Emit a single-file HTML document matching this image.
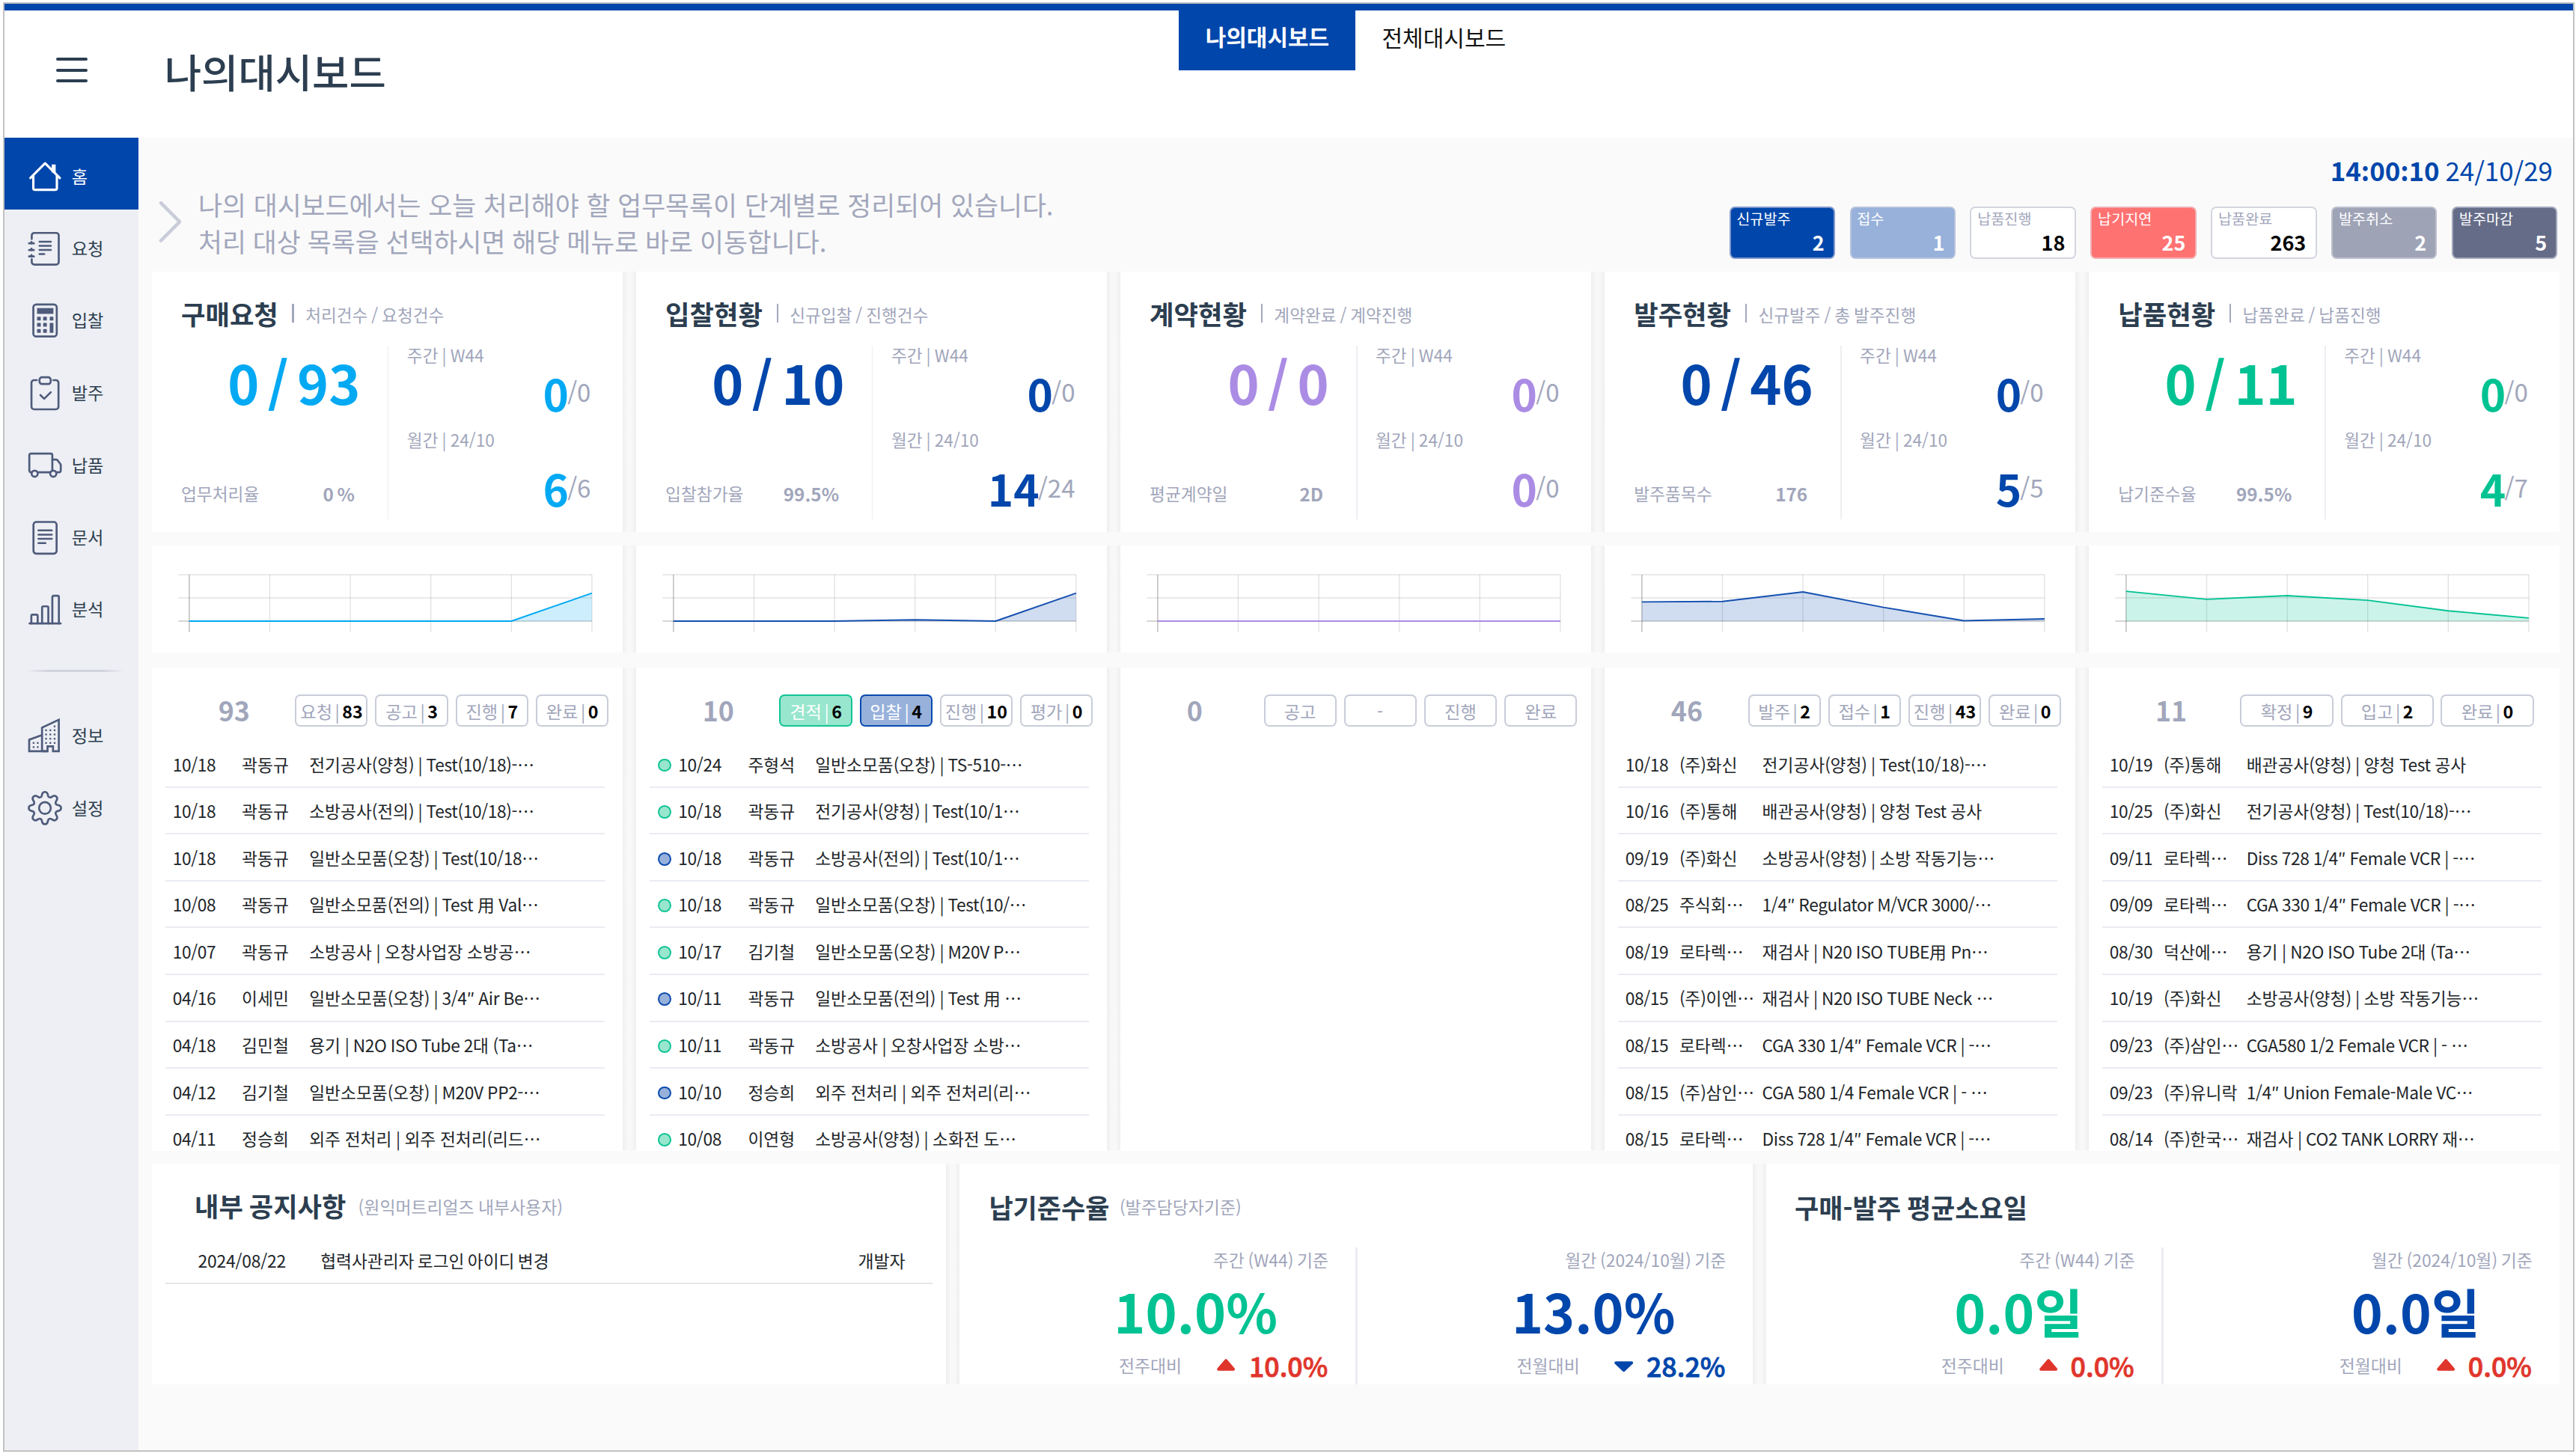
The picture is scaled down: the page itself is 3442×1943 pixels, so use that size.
<!DOCTYPE html>
<html lang="ko"><head><meta charset="utf-8"><title>나의대시보드</title>
<style>
html,body{margin:0;padding:0;background:#fff;}
body{width:3442px;height:1943px;overflow:hidden;position:relative;font-family:"Noto Sans CJK KR","Liberation Sans","NanumGothic",sans-serif;}
#pos{position:absolute;left:6px;top:5px;}
#frame{position:absolute;left:0;top:0;width:1920px;height:1081.5px;zoom:1.7875;background:#fafafa;outline:1.12px solid #c2c2c2;}
#clip{position:absolute;left:0;top:0;width:1920px;height:1081.5px;overflow:hidden;}
@supports not (zoom:2){#frame{transform:scale(1.7875);transform-origin:0 0;}}
.t{position:absolute;white-space:nowrap;margin:0;}
.b{position:absolute;box-sizing:border-box;}
.ic{position:absolute;width:24px;height:24px;overflow:visible;}
.card{position:absolute;background:#fff;overflow:hidden;}
.gap{position:absolute;width:10px;background:linear-gradient(90deg,#efefef 0%,#f8f8f8 35%,#f8f8f8 65%,#efefef 100%);}
.btn{position:absolute;box-sizing:border-box;height:24px;border:1.12px solid #c9cdd9;border-radius:4px;background:#fff;text-align:center;font-size:13px;line-height:23px;word-spacing:-1.7px;color:#a1a6bb;white-space:nowrap;}
.btn b{color:#000;font-weight:700;}
.row{position:absolute;left:10px;width:328.5px;height:35px;box-sizing:border-box;border-bottom:1.12px solid #eaecf3;font-size:12.72px;line-height:35px;color:#212529;white-space:nowrap;word-spacing:-0.4px;}
.row>span{position:absolute;top:0.25px;}
.row .l{letter-spacing:-0.2px;}
.dot{position:absolute;width:10px;height:10px;border-radius:50%;box-sizing:border-box;border:1.12px solid;}
</style></head><body>
<div id="pos"><div id="frame"><div id="clip">
<div class="b" style="left:0.00px;top:0.00px;width:1920.00px;height:100.00px;background:#fff;"></div>
<div class="b" style="left:0.00px;top:0.00px;width:1920.00px;height:5.00px;background:#0046ab;"></div>
<div class="b" style="left:38.40px;top:40.25px;width:23.80px;height:2.30px;background:#2c3e50;border-radius:1.2px;"></div>
<div class="b" style="left:38.40px;top:48.45px;width:23.80px;height:2.30px;background:#2c3e50;border-radius:1.2px;"></div>
<div class="b" style="left:38.40px;top:56.65px;width:23.80px;height:2.30px;background:#2c3e50;border-radius:1.2px;"></div>
<div class="t" style="top:28.65px;font-size:30px;line-height:44px;font-weight:500;color:#2c3e50;left:119.60px;">나의대시보드</div>
<div class="b" style="left:878.00px;top:5.00px;width:132.00px;height:45.00px;background:#0046ab;"></div>
<div class="t" style="top:11.38px;font-size:16.75px;line-height:26px;font-weight:700;color:#fff;left:644.00px;width:600px;text-align:center;">나의대시보드</div>
<div class="t" style="top:11.58px;font-size:16.8px;line-height:26px;font-weight:400;color:#111;left:776.00px;width:600px;text-align:center;">전체대시보드</div>
<div class="b" style="left:0.00px;top:100.00px;width:100.00px;height:982.00px;background:#edeff4;"></div>
<div class="b" style="left:0.00px;top:100.00px;width:100.00px;height:54.00px;background:#0046ab;"></div>
<svg class="ic" style="left:18.6px;top:116.5px;width:25px;height:25px" viewBox="0 0 25 25" fill="none" stroke="#fff" stroke-width="1.75" stroke-linecap="round" stroke-linejoin="round"><path d="M0.9 13.9 L11.9 2.9 L22.9 13.9" /><path d="M3.1 12.1 V21.5 a1.2 1.2 0 0 0 1.2 1.2 H19.5 a1.2 1.2 0 0 0 1.2-1.2 V12.1" /><rect x="16.8" y="3.8" width="3" height="6" fill="#fff" stroke="none"/></svg>
<div class="t" style="top:119.38px;font-size:13px;line-height:20px;font-weight:400;color:#fff;left:50.20px;">홈</div>
<svg class="ic" style="left:18.6px;top:170.5px;width:25px;height:25px" viewBox="0 0 25 25" fill="none" stroke="#4e5b7b" stroke-width="1.5" stroke-linecap="round" stroke-linejoin="round"><path d="M1.9 5.2 V2.7 a2 2 0 0 1 2-2 H20.1 a2 2 0 0 1 2 2 V22.4 a2 2 0 0 1-2 2 H3.9 a2 2 0 0 1-2-2 V20.4"/><path d="M-0.1 8.5 h3.6 M-0.1 13.5 h3.6 M-0.1 18.3 h3.6" stroke-width="1.5"/><path d="M1.7 7.5 v1 M1.7 12.5 v1 M1.7 17.3 v1" stroke-width="1.6"/><path d="M7.7 7.25 h8.5 M7.7 10.35 h8.5 M7.7 13.45 h8.5 M7.7 16.5 h3.6" stroke-width="1.45"/></svg>
<div class="t" style="top:172.78px;font-size:13px;line-height:20px;font-weight:400;color:#2c3e50;left:50.20px;">요청</div>
<svg class="ic" style="left:18.6px;top:224.5px;width:25px;height:25px" viewBox="0 0 25 25" fill="none" stroke="#4e5b7b" stroke-width="1.5" stroke-linecap="round" stroke-linejoin="round"><rect x="3.1" y="0.5" width="17.5" height="23.9" rx="2.2"/><rect x="5.9" y="3.2" width="12.2" height="4.3" fill="#4e5b7b" stroke="none"/><g fill="#4e5b7b" stroke="none"><rect x="5.9" y="9.7" width="2.75" height="2.75" rx=".3"/><rect x="10.45" y="9.7" width="2.75" height="2.75" rx=".3"/><rect x="15.35" y="9.7" width="2.75" height="2.75" rx=".3"/><rect x="5.9" y="14.3" width="2.75" height="2.75" rx=".3"/><rect x="10.45" y="14.3" width="2.75" height="2.75" rx=".3"/><rect x="15.35" y="14.3" width="2.75" height="7.4" rx=".3"/><rect x="5.9" y="18.95" width="2.75" height="2.75" rx=".3"/><rect x="10.45" y="18.95" width="2.75" height="2.75" rx=".3"/></g></svg>
<div class="t" style="top:226.78px;font-size:13px;line-height:20px;font-weight:400;color:#2c3e50;left:50.20px;">입찰</div>
<svg class="ic" style="left:18.6px;top:278.5px;width:25px;height:25px" viewBox="0 0 25 25" fill="none" stroke="#4e5b7b" stroke-width="1.5" stroke-linecap="round" stroke-linejoin="round"><path d="M5.7 2.8 H3.7 a2 2 0 0 0-2 2 V22.6 a2 2 0 0 0 2 2 H19.9 a2 2 0 0 0 2-2 V4.8 a2 2 0 0 0-2-2 H18.1"/><rect x="7.7" y="0.65" width="8.4" height="5.05" rx="1.9"/><path d="M8.4 14 L11.2 16.7 L16.15 11.8"/></svg>
<div class="t" style="top:280.79px;font-size:13px;line-height:20px;font-weight:400;color:#2c3e50;left:50.20px;">발주</div>
<svg class="ic" style="left:18.6px;top:332.5px;width:25px;height:25px" viewBox="0 0 25 25" fill="none" stroke="#4e5b7b" stroke-width="1.5" stroke-linecap="round" stroke-linejoin="round"><path d="M1.9 18 H1.3 a1.2 1.2 0 0 1-1.2-1.2 V5.2 a1.2 1.2 0 0 1 1.2-1.2 H16.1 a1.2 1.2 0 0 1 1.2 1.2 V16.7"/><path d="M6.4 18 H15.7"/><path d="M17.3 8.45 H20.1 a1.4 1.4 0 0 1 1 .45 L23.2 11.6 a1.4 1.4 0 0 1 .4 1 V16.8 a1.2 1.2 0 0 1-1.2 1.2 H20.3"/><circle cx="4.1" cy="19" r="2.3"/><circle cx="18" cy="19" r="2.3"/></svg>
<div class="t" style="top:335.19px;font-size:13px;line-height:20px;font-weight:400;color:#2c3e50;left:50.20px;">납품</div>
<svg class="ic" style="left:18.6px;top:386.5px;width:25px;height:25px" viewBox="0 0 25 25" fill="none" stroke="#4e5b7b" stroke-width="1.5" stroke-linecap="round" stroke-linejoin="round"><rect x="3.2" y="0.85" width="17.3" height="23.65" rx="2.1"/><path d="M6.9 7.1 h10 M6.9 10.3 h10 M6.9 13.4 h10 M6.9 16.6 h5.3" stroke-width="1.4"/></svg>
<div class="t" style="top:388.79px;font-size:13px;line-height:20px;font-weight:400;color:#2c3e50;left:50.20px;">문서</div>
<svg class="ic" style="left:18.6px;top:440.5px;width:25px;height:25px" viewBox="0 0 25 25" fill="none" stroke="#4e5b7b" stroke-width="1.5" stroke-linecap="round" stroke-linejoin="round"><path d="M0.3 23 H23.5" stroke-width="1.6"/><path d="M1.6 23 V17.3 a.9 .9 0 0 1 .9-.9 h2.95 a.9 .9 0 0 1 .9 .9 V23"/><path d="M9.65 23 V11.1 a.9 .9 0 0 1 .9-.9 h2.85 a.9 .9 0 0 1 .9 .9 V23"/><path d="M17.3 23 V3.2 a.9 .9 0 0 1 .9-.9 h3.1 a.9 .9 0 0 1 .9 .9 V23"/></svg>
<div class="t" style="top:442.79px;font-size:13px;line-height:20px;font-weight:400;color:#2c3e50;left:50.20px;">분석</div>
<svg class="ic" style="left:18.6px;top:534.9px;width:25px;height:25px" viewBox="0 0 25 25" fill="none" stroke="#4e5b7b" stroke-width="1.5" stroke-linecap="round" stroke-linejoin="round"><path d="M9.6 24 V6.3 L22.15 0.5 V24 H17.8 V20.4 H13.7 V24 H0 V15.4 L9.6 11.95" stroke-linejoin="miter"/><path d="M9.6 24 H13.7" /><g fill="#4e5b7b" stroke="none"><rect x="11.95" y="7.65" width="1.3" height="1.3"/><rect x="11.95" y="10.80" width="1.3" height="1.3"/><rect x="11.95" y="14.00" width="1.3" height="1.3"/><rect x="11.95" y="17.15" width="1.3" height="1.3"/><rect x="15.15" y="7.65" width="1.3" height="1.3"/><rect x="15.15" y="10.80" width="1.3" height="1.3"/><rect x="15.15" y="14.00" width="1.3" height="1.3"/><rect x="15.15" y="17.15" width="1.3" height="1.3"/><rect x="18.35" y="7.65" width="1.3" height="1.3"/><rect x="18.35" y="10.80" width="1.3" height="1.3"/><rect x="18.35" y="14.00" width="1.3" height="1.3"/><rect x="18.35" y="17.15" width="1.3" height="1.3"/><rect x="18.35" y="4.75" width="1.3" height="1.3"/><rect x="2.65" y="17.15" width="1.3" height="1.3"/><rect x="2.65" y="20.25" width="1.3" height="1.3"/><rect x="5.75" y="17.15" width="1.3" height="1.3"/><rect x="5.75" y="20.25" width="1.3" height="1.3"/></g></svg>
<div class="t" style="top:537.18px;font-size:13px;line-height:20px;font-weight:400;color:#2c3e50;left:50.20px;">정보</div>
<svg class="ic" style="left:18.6px;top:588.9px;width:25px;height:25px" viewBox="0 0 25 25" fill="none" stroke="#4e5b7b" stroke-width="1.5" stroke-linecap="round" stroke-linejoin="round"><g transform="translate(-0.74,-0.3)"><circle cx="12.5" cy="12.5" r="4.4"/><path d="M10.5 1.9 a2.1 2.1 0 0 1 4 0 l.4 1.5 a1.6 1.6 0 0 0 2.3 .95 l1.35-.75 a2.1 2.1 0 0 1 2.85 2.85 l-.75 1.35 a1.6 1.6 0 0 0 .95 2.3 l1.5 .4 a2.1 2.1 0 0 1 0 4 l-1.5 .4 a1.6 1.6 0 0 0-.95 2.3 l.75 1.35 a2.1 2.1 0 0 1-2.85 2.85 l-1.35-.75 a1.6 1.6 0 0 0-2.3 .95 l-.4 1.5 a2.1 2.1 0 0 1-4 0 l-.4-1.5 a1.6 1.6 0 0 0-2.3-.95 l-1.35 .75 a2.1 2.1 0 0 1-2.85-2.85 l.75-1.35 a1.6 1.6 0 0 0-.95-2.3 l-1.5-.4 a2.1 2.1 0 0 1 0-4 l1.5-.4 a1.6 1.6 0 0 0 .95-2.3 l-.75-1.35 a2.1 2.1 0 0 1 2.85-2.85 l1.35 .75 a1.6 1.6 0 0 0 2.3-.95 z"/></g></svg>
<div class="t" style="top:591.18px;font-size:13px;line-height:20px;font-weight:400;color:#2c3e50;left:50.20px;">설정</div>
<div class="b" style="left:17.00px;top:498.10px;width:72.00px;height:1.30px;background:linear-gradient(90deg,rgba(208,210,222,0),rgba(208,210,222,1) 22%,rgba(208,210,222,1) 78%,rgba(208,210,222,0));"></div>
<div class="t" lang="en" style="right:15.2px;top:109.5px;font-size:19.5px;line-height:30px;color:#0046ab;"><b style="font-weight:700">14:00:10</b> 24/10/29</div>
<svg class="ic" style="left:112px;top:146px;width:24px;height:34px" viewBox="0 0 24 34" fill="none" stroke="#c9cdda" stroke-width="2.5" stroke-linecap="round" stroke-linejoin="round"><path d="M5 2.9 L19.1 17 L5 31.1"/></svg>
<div class="t" style="top:137.08px;font-size:19.45px;line-height:26px;font-weight:400;color:#a2a7bc;left:144.90px;">나의 대시보드에서는 오늘 처리해야 할 업무목록이 단계별로 정리되어 있습니다.</div>
<div class="t" style="top:164.43px;font-size:19.45px;line-height:26px;font-weight:400;color:#a2a7bc;left:144.90px;word-spacing:-0.45px;">처리 대상 목록을 선택하시면 해당 메뉴로 바로 이동합니다.</div>
<div class="b" style="left:1289.30px;top:151.80px;width:79.00px;height:39.00px;background:#0046ab;border:1.12px solid #7f98cc;border-radius:4px;"></div>
<div class="t" style="top:152.90px;font-size:11px;line-height:16px;font-weight:400;color:#fff;left:1294.70px;">신규발주</div>
<div class="t" style="top:168.47px;font-size:15.1px;line-height:20px;font-weight:700;color:#fff;right:559.70px;text-align:right;">2</div>
<div class="b" style="left:1379.33px;top:151.80px;width:79.00px;height:39.00px;background:#97b1da;border:1.12px solid #b7c3dc;border-radius:4px;"></div>
<div class="t" style="top:152.90px;font-size:11px;line-height:16px;font-weight:400;color:#fff;left:1384.73px;">접수</div>
<div class="t" style="top:168.47px;font-size:15.1px;line-height:20px;font-weight:700;color:#fff;right:469.67px;text-align:right;">1</div>
<div class="b" style="left:1469.36px;top:151.80px;width:79.00px;height:39.00px;background:#fff;border:1.12px solid #d3d6e0;border-radius:4px;"></div>
<div class="t" style="top:152.90px;font-size:11px;line-height:16px;font-weight:400;color:#a1a6bb;left:1474.76px;">납품진행</div>
<div class="t" style="top:168.47px;font-size:15.1px;line-height:20px;font-weight:700;color:#000;right:379.64px;text-align:right;">18</div>
<div class="b" style="left:1559.39px;top:151.80px;width:79.00px;height:39.00px;background:#ff7272;border:1.12px solid #f2aeb2;border-radius:4px;"></div>
<div class="t" style="top:152.90px;font-size:11px;line-height:16px;font-weight:400;color:#fff;left:1564.79px;">납기지연</div>
<div class="t" style="top:168.47px;font-size:15.1px;line-height:20px;font-weight:700;color:#fff;right:289.61px;text-align:right;">25</div>
<div class="b" style="left:1649.42px;top:151.80px;width:79.00px;height:39.00px;background:#fff;border:1.12px solid #d3d6e0;border-radius:4px;"></div>
<div class="t" style="top:152.90px;font-size:11px;line-height:16px;font-weight:400;color:#a1a6bb;left:1654.82px;">납품완료</div>
<div class="t" style="top:168.47px;font-size:15.1px;line-height:20px;font-weight:700;color:#000;right:199.58px;text-align:right;">263</div>
<div class="b" style="left:1739.45px;top:151.80px;width:79.00px;height:39.00px;background:#9ea3b6;border:1.12px solid #bcc0ce;border-radius:4px;"></div>
<div class="t" style="top:152.90px;font-size:11px;line-height:16px;font-weight:400;color:#fff;left:1744.85px;">발주취소</div>
<div class="t" style="top:168.47px;font-size:15.1px;line-height:20px;font-weight:700;color:#fff;right:109.55px;text-align:right;">2</div>
<div class="b" style="left:1829.48px;top:151.80px;width:79.00px;height:39.00px;background:#646c88;border:1.12px solid #a3a8ba;border-radius:4px;"></div>
<div class="t" style="top:152.90px;font-size:11px;line-height:16px;font-weight:400;color:#fff;left:1834.88px;">발주마감</div>
<div class="t" style="top:168.47px;font-size:15.1px;line-height:20px;font-weight:700;color:#fff;right:19.52px;text-align:right;">5</div>
<div class="b" style="left:110.00px;top:200.00px;width:352.00px;height:195.00px;background:#fff;"></div>
<div class="t" style="top:216.51px;font-size:19.75px;line-height:30px;font-weight:700;color:#2c3e50;left:132.00px;">구매요청</div>
<div class="b" style="left:215.10px;top:224.30px;width:1.30px;height:14.20px;background:#a3a8bc;"></div>
<div class="t" style="top:222.80px;font-size:12.65px;line-height:20px;font-weight:400;color:#a1a6bb;left:225.00px;word-spacing:-0.8px;">처리건수 / 요청건수</div>
<div class="t" style="top:254.70px;font-size:40px;line-height:56px;font-weight:700;color:#03a9f3;right:1654.00px;text-align:right;word-spacing:-4.8px;">0 / 93</div>
<div class="b" style="left:286.20px;top:255.40px;width:1.00px;height:129.80px;background:#eeeef3;"></div>
<div class="t" style="top:252.80px;font-size:12.65px;line-height:20px;font-weight:400;color:#a1a6bb;left:300.90px;word-spacing:-0.7px;">주간 | W44</div>
<div class="t" style="top:316.15px;font-size:12.65px;line-height:20px;font-weight:400;color:#a1a6bb;left:300.90px;word-spacing:-0.7px;">월간 | 24/10</div>
<div class="t" style="right:1481.70px;top:266.6px;line-height:48px;font-size:32.7px;font-weight:700;color:#03a9f3;">0<span style="font-size:18.5px;font-weight:400;color:#a1a6bb;position:relative;top:-6.9px;margin-left:-1px;">/0</span></div>
<div class="t" style="right:1481.70px;top:338.1px;line-height:48px;font-size:32.7px;font-weight:700;color:#03a9f3;">6<span style="font-size:18.5px;font-weight:400;color:#a1a6bb;position:relative;top:-6.9px;margin-left:-1px;">/6</span></div>
<div class="t" style="top:356.20px;font-size:12.7px;line-height:20px;font-weight:400;color:#a1a6bb;left:132.00px;">업무처리율</div>
<div class="t" style="top:356.15px;font-size:13.6px;line-height:20px;font-weight:700;color:#a1a6bb;right:1658.20px;text-align:right;word-spacing:-1.2px;">0 %</div>
<div class="b" style="left:472.00px;top:200.00px;width:352.00px;height:195.00px;background:#fff;"></div>
<div class="t" style="top:216.51px;font-size:19.75px;line-height:30px;font-weight:700;color:#2c3e50;left:494.00px;">입찰현황</div>
<div class="b" style="left:577.10px;top:224.30px;width:1.30px;height:14.20px;background:#a3a8bc;"></div>
<div class="t" style="top:222.80px;font-size:12.65px;line-height:20px;font-weight:400;color:#a1a6bb;left:587.00px;word-spacing:-0.8px;">신규입찰 / 진행건수</div>
<div class="t" style="top:254.70px;font-size:40px;line-height:56px;font-weight:700;color:#0046ab;right:1292.00px;text-align:right;word-spacing:-4.8px;">0 / 10</div>
<div class="b" style="left:648.20px;top:255.40px;width:1.00px;height:129.80px;background:#eeeef3;"></div>
<div class="t" style="top:252.80px;font-size:12.65px;line-height:20px;font-weight:400;color:#a1a6bb;left:662.90px;word-spacing:-0.7px;">주간 | W44</div>
<div class="t" style="top:316.15px;font-size:12.65px;line-height:20px;font-weight:400;color:#a1a6bb;left:662.90px;word-spacing:-0.7px;">월간 | 24/10</div>
<div class="t" style="right:1119.70px;top:266.6px;line-height:48px;font-size:32.7px;font-weight:700;color:#0046ab;">0<span style="font-size:18.5px;font-weight:400;color:#a1a6bb;position:relative;top:-6.9px;margin-left:-1px;">/0</span></div>
<div class="t" style="right:1119.70px;top:338.1px;line-height:48px;font-size:32.7px;font-weight:700;color:#0046ab;">14<span style="font-size:18.5px;font-weight:400;color:#a1a6bb;position:relative;top:-6.9px;margin-left:-1px;">/24</span></div>
<div class="t" style="top:356.20px;font-size:12.7px;line-height:20px;font-weight:400;color:#a1a6bb;left:494.00px;">입찰참가율</div>
<div class="t" style="top:356.15px;font-size:13.6px;line-height:20px;font-weight:700;color:#a1a6bb;right:1296.20px;text-align:right;word-spacing:-1.2px;">99.5%</div>
<div class="b" style="left:834.00px;top:200.00px;width:352.00px;height:195.00px;background:#fff;"></div>
<div class="t" style="top:216.51px;font-size:19.75px;line-height:30px;font-weight:700;color:#2c3e50;left:856.00px;">계약현황</div>
<div class="b" style="left:939.10px;top:224.30px;width:1.30px;height:14.20px;background:#a3a8bc;"></div>
<div class="t" style="top:222.80px;font-size:12.65px;line-height:20px;font-weight:400;color:#a1a6bb;left:949.00px;word-spacing:-0.8px;">계약완료 / 계약진행</div>
<div class="t" style="top:254.70px;font-size:40px;line-height:56px;font-weight:700;color:#ab8ce4;right:930.00px;text-align:right;word-spacing:-4.8px;">0 / 0</div>
<div class="b" style="left:1010.20px;top:255.40px;width:1.00px;height:129.80px;background:#eeeef3;"></div>
<div class="t" style="top:252.80px;font-size:12.65px;line-height:20px;font-weight:400;color:#a1a6bb;left:1024.90px;word-spacing:-0.7px;">주간 | W44</div>
<div class="t" style="top:316.15px;font-size:12.65px;line-height:20px;font-weight:400;color:#a1a6bb;left:1024.90px;word-spacing:-0.7px;">월간 | 24/10</div>
<div class="t" style="right:757.70px;top:266.6px;line-height:48px;font-size:32.7px;font-weight:700;color:#ab8ce4;">0<span style="font-size:18.5px;font-weight:400;color:#a1a6bb;position:relative;top:-6.9px;margin-left:-1px;">/0</span></div>
<div class="t" style="right:757.70px;top:338.1px;line-height:48px;font-size:32.7px;font-weight:700;color:#ab8ce4;">0<span style="font-size:18.5px;font-weight:400;color:#a1a6bb;position:relative;top:-6.9px;margin-left:-1px;">/0</span></div>
<div class="t" style="top:356.20px;font-size:12.7px;line-height:20px;font-weight:400;color:#a1a6bb;left:856.00px;">평균계약일</div>
<div class="t" style="top:356.15px;font-size:13.6px;line-height:20px;font-weight:700;color:#a1a6bb;right:934.20px;text-align:right;word-spacing:-1.2px;">2D</div>
<div class="b" style="left:1196.00px;top:200.00px;width:352.00px;height:195.00px;background:#fff;"></div>
<div class="t" style="top:216.51px;font-size:19.75px;line-height:30px;font-weight:700;color:#2c3e50;left:1218.00px;">발주현황</div>
<div class="b" style="left:1301.10px;top:224.30px;width:1.30px;height:14.20px;background:#a3a8bc;"></div>
<div class="t" style="top:222.80px;font-size:12.65px;line-height:20px;font-weight:400;color:#a1a6bb;left:1311.00px;word-spacing:-0.8px;">신규발주 / 총 발주진행</div>
<div class="t" style="top:254.70px;font-size:40px;line-height:56px;font-weight:700;color:#0046ab;right:568.00px;text-align:right;word-spacing:-4.8px;">0 / 46</div>
<div class="b" style="left:1372.20px;top:255.40px;width:1.00px;height:129.80px;background:#eeeef3;"></div>
<div class="t" style="top:252.80px;font-size:12.65px;line-height:20px;font-weight:400;color:#a1a6bb;left:1386.90px;word-spacing:-0.7px;">주간 | W44</div>
<div class="t" style="top:316.15px;font-size:12.65px;line-height:20px;font-weight:400;color:#a1a6bb;left:1386.90px;word-spacing:-0.7px;">월간 | 24/10</div>
<div class="t" style="right:395.70px;top:266.6px;line-height:48px;font-size:32.7px;font-weight:700;color:#0046ab;">0<span style="font-size:18.5px;font-weight:400;color:#a1a6bb;position:relative;top:-6.9px;margin-left:-1px;">/0</span></div>
<div class="t" style="right:395.70px;top:338.1px;line-height:48px;font-size:32.7px;font-weight:700;color:#0046ab;">5<span style="font-size:18.5px;font-weight:400;color:#a1a6bb;position:relative;top:-6.9px;margin-left:-1px;">/5</span></div>
<div class="t" style="top:356.20px;font-size:12.7px;line-height:20px;font-weight:400;color:#a1a6bb;left:1218.00px;">발주품목수</div>
<div class="t" style="top:356.15px;font-size:13.6px;line-height:20px;font-weight:700;color:#a1a6bb;right:572.20px;text-align:right;word-spacing:-1.2px;">176</div>
<div class="b" style="left:1558.00px;top:200.00px;width:352.00px;height:195.00px;background:#fff;"></div>
<div class="t" style="top:216.51px;font-size:19.75px;line-height:30px;font-weight:700;color:#2c3e50;left:1580.00px;">납품현황</div>
<div class="b" style="left:1663.10px;top:224.30px;width:1.30px;height:14.20px;background:#a3a8bc;"></div>
<div class="t" style="top:222.80px;font-size:12.65px;line-height:20px;font-weight:400;color:#a1a6bb;left:1673.00px;word-spacing:-0.8px;">납품완료 / 납품진행</div>
<div class="t" style="top:254.70px;font-size:40px;line-height:56px;font-weight:700;color:#00c292;right:206.00px;text-align:right;word-spacing:-4.8px;">0 / 11</div>
<div class="b" style="left:1734.20px;top:255.40px;width:1.00px;height:129.80px;background:#eeeef3;"></div>
<div class="t" style="top:252.80px;font-size:12.65px;line-height:20px;font-weight:400;color:#a1a6bb;left:1748.90px;word-spacing:-0.7px;">주간 | W44</div>
<div class="t" style="top:316.15px;font-size:12.65px;line-height:20px;font-weight:400;color:#a1a6bb;left:1748.90px;word-spacing:-0.7px;">월간 | 24/10</div>
<div class="t" style="right:33.70px;top:266.6px;line-height:48px;font-size:32.7px;font-weight:700;color:#00c292;">0<span style="font-size:18.5px;font-weight:400;color:#a1a6bb;position:relative;top:-6.9px;margin-left:-1px;">/0</span></div>
<div class="t" style="right:33.70px;top:338.1px;line-height:48px;font-size:32.7px;font-weight:700;color:#00c292;">4<span style="font-size:18.5px;font-weight:400;color:#a1a6bb;position:relative;top:-6.9px;margin-left:-1px;">/7</span></div>
<div class="t" style="top:356.20px;font-size:12.7px;line-height:20px;font-weight:400;color:#a1a6bb;left:1580.00px;">납기준수율</div>
<div class="t" style="top:356.15px;font-size:13.6px;line-height:20px;font-weight:700;color:#a1a6bb;right:210.20px;text-align:right;word-spacing:-1.2px;">99.5%</div>
<div class="gap" style="left:462px;top:200px;height:195px"></div>
<div class="gap" style="left:824px;top:200px;height:195px"></div>
<div class="gap" style="left:1186px;top:200px;height:195px"></div>
<div class="gap" style="left:1548px;top:200px;height:195px"></div>
<div class="gap" style="left:462px;top:405px;height:80px"></div>
<div class="gap" style="left:824px;top:405px;height:80px"></div>
<div class="gap" style="left:1186px;top:405px;height:80px"></div>
<div class="gap" style="left:1548px;top:405px;height:80px"></div>
<div class="gap" style="left:462px;top:496.3px;height:361px"></div>
<div class="gap" style="left:824px;top:496.3px;height:361px"></div>
<div class="gap" style="left:1186px;top:496.3px;height:361px"></div>
<div class="gap" style="left:1548px;top:496.3px;height:361px"></div>
<div class="card" style="left:110px;top:405px;width:352px;height:80px"><svg width="352" height="80" viewBox="0 0 352 80" style="position:absolute;left:0;top:0"><path d="M19.8 21.8 H328.9" stroke="rgba(0,0,0,0.11)" stroke-width="0.8"/><path d="M19.8 39.2 H328.9" stroke="rgba(0,0,0,0.11)" stroke-width="0.8"/><path d="M19.8 56.5 H328.9" stroke="rgba(0,0,0,0.22)" stroke-width="0.8"/><path d="M27.9 21.8 V64.6" stroke="rgba(0,0,0,0.27)" stroke-width="0.8"/><path d="M88.1 21.8 V64.6" stroke="rgba(0,0,0,0.11)" stroke-width="0.8"/><path d="M148.3 21.8 V64.6" stroke="rgba(0,0,0,0.11)" stroke-width="0.8"/><path d="M208.5 21.8 V64.6" stroke="rgba(0,0,0,0.11)" stroke-width="0.8"/><path d="M268.7 21.8 V64.6" stroke="rgba(0,0,0,0.11)" stroke-width="0.8"/><path d="M328.9 21.8 V64.6" stroke="rgba(0,0,0,0.11)" stroke-width="0.8"/><polygon points="27.9,56.5 27.9,56.5 88.1,56.5 148.3,56.5 208.5,56.5 268.7,56.5 328.9,35.6 328.9,56.5" fill="#03a9f3" fill-opacity="0.2"/><polyline points="27.9,56.5 88.1,56.5 148.3,56.5 208.5,56.5 268.7,56.5 328.9,35.6" fill="none" stroke="#03a9f3" stroke-width="1.05" stroke-linejoin="round"/></svg></div>
<div class="card" style="left:472px;top:405px;width:352px;height:80px"><svg width="352" height="80" viewBox="0 0 352 80" style="position:absolute;left:0;top:0"><path d="M19.8 21.8 H328.9" stroke="rgba(0,0,0,0.11)" stroke-width="0.8"/><path d="M19.8 39.2 H328.9" stroke="rgba(0,0,0,0.11)" stroke-width="0.8"/><path d="M19.8 56.5 H328.9" stroke="rgba(0,0,0,0.22)" stroke-width="0.8"/><path d="M27.9 21.8 V64.6" stroke="rgba(0,0,0,0.27)" stroke-width="0.8"/><path d="M88.1 21.8 V64.6" stroke="rgba(0,0,0,0.11)" stroke-width="0.8"/><path d="M148.3 21.8 V64.6" stroke="rgba(0,0,0,0.11)" stroke-width="0.8"/><path d="M208.5 21.8 V64.6" stroke="rgba(0,0,0,0.11)" stroke-width="0.8"/><path d="M268.7 21.8 V64.6" stroke="rgba(0,0,0,0.11)" stroke-width="0.8"/><path d="M328.9 21.8 V64.6" stroke="rgba(0,0,0,0.11)" stroke-width="0.8"/><polygon points="27.9,56.5 27.9,56.5 88.1,56.5 148.3,56.5 208.5,55.5 268.7,56.5 328.9,35.6 328.9,56.5" fill="#1450b0" fill-opacity="0.2"/><polyline points="27.9,56.5 88.1,56.5 148.3,56.5 208.5,55.5 268.7,56.5 328.9,35.6" fill="none" stroke="#1450b0" stroke-width="1.05" stroke-linejoin="round"/></svg></div>
<div class="card" style="left:834px;top:405px;width:352px;height:80px"><svg width="352" height="80" viewBox="0 0 352 80" style="position:absolute;left:0;top:0"><path d="M19.8 21.8 H328.9" stroke="rgba(0,0,0,0.11)" stroke-width="0.8"/><path d="M19.8 39.2 H328.9" stroke="rgba(0,0,0,0.11)" stroke-width="0.8"/><path d="M19.8 56.5 H328.9" stroke="rgba(0,0,0,0.22)" stroke-width="0.8"/><path d="M27.9 21.8 V64.6" stroke="rgba(0,0,0,0.27)" stroke-width="0.8"/><path d="M88.1 21.8 V64.6" stroke="rgba(0,0,0,0.11)" stroke-width="0.8"/><path d="M148.3 21.8 V64.6" stroke="rgba(0,0,0,0.11)" stroke-width="0.8"/><path d="M208.5 21.8 V64.6" stroke="rgba(0,0,0,0.11)" stroke-width="0.8"/><path d="M268.7 21.8 V64.6" stroke="rgba(0,0,0,0.11)" stroke-width="0.8"/><path d="M328.9 21.8 V64.6" stroke="rgba(0,0,0,0.11)" stroke-width="0.8"/><polygon points="27.9,56.5 27.9,56.5 88.1,56.5 148.3,56.5 208.5,56.5 268.7,56.5 328.9,56.5 328.9,56.5" fill="#ab8ce4" fill-opacity="0.2"/><polyline points="27.9,56.5 88.1,56.5 148.3,56.5 208.5,56.5 268.7,56.5 328.9,56.5" fill="none" stroke="#ab8ce4" stroke-width="1.05" stroke-linejoin="round"/></svg></div>
<div class="card" style="left:1196px;top:405px;width:352px;height:80px"><svg width="352" height="80" viewBox="0 0 352 80" style="position:absolute;left:0;top:0"><path d="M19.8 21.8 H328.9" stroke="rgba(0,0,0,0.11)" stroke-width="0.8"/><path d="M19.8 39.2 H328.9" stroke="rgba(0,0,0,0.11)" stroke-width="0.8"/><path d="M19.8 56.5 H328.9" stroke="rgba(0,0,0,0.22)" stroke-width="0.8"/><path d="M27.9 21.8 V64.6" stroke="rgba(0,0,0,0.27)" stroke-width="0.8"/><path d="M88.1 21.8 V64.6" stroke="rgba(0,0,0,0.11)" stroke-width="0.8"/><path d="M148.3 21.8 V64.6" stroke="rgba(0,0,0,0.11)" stroke-width="0.8"/><path d="M208.5 21.8 V64.6" stroke="rgba(0,0,0,0.11)" stroke-width="0.8"/><path d="M268.7 21.8 V64.6" stroke="rgba(0,0,0,0.11)" stroke-width="0.8"/><path d="M328.9 21.8 V64.6" stroke="rgba(0,0,0,0.11)" stroke-width="0.8"/><polygon points="27.9,56.5 27.9,42.2 88.1,41.8 148.3,34.7 208.5,46.2 268.7,56.2 328.9,54.8 328.9,56.5" fill="#1450b0" fill-opacity="0.2"/><polyline points="27.9,42.2 88.1,41.8 148.3,34.7 208.5,46.2 268.7,56.2 328.9,54.8" fill="none" stroke="#1450b0" stroke-width="1.05" stroke-linejoin="round"/></svg></div>
<div class="card" style="left:1558px;top:405px;width:352px;height:80px"><svg width="352" height="80" viewBox="0 0 352 80" style="position:absolute;left:0;top:0"><path d="M19.8 21.8 H328.9" stroke="rgba(0,0,0,0.11)" stroke-width="0.8"/><path d="M19.8 39.2 H328.9" stroke="rgba(0,0,0,0.11)" stroke-width="0.8"/><path d="M19.8 56.5 H328.9" stroke="rgba(0,0,0,0.22)" stroke-width="0.8"/><path d="M27.9 21.8 V64.6" stroke="rgba(0,0,0,0.27)" stroke-width="0.8"/><path d="M88.1 21.8 V64.6" stroke="rgba(0,0,0,0.11)" stroke-width="0.8"/><path d="M148.3 21.8 V64.6" stroke="rgba(0,0,0,0.11)" stroke-width="0.8"/><path d="M208.5 21.8 V64.6" stroke="rgba(0,0,0,0.11)" stroke-width="0.8"/><path d="M268.7 21.8 V64.6" stroke="rgba(0,0,0,0.11)" stroke-width="0.8"/><path d="M328.9 21.8 V64.6" stroke="rgba(0,0,0,0.11)" stroke-width="0.8"/><polygon points="27.9,56.5 27.9,34.2 88.1,40.2 148.3,37.5 208.5,40.9 268.7,48.8 328.9,54.2 328.9,56.5" fill="#00c292" fill-opacity="0.2"/><polyline points="27.9,34.2 88.1,40.2 148.3,37.5 208.5,40.9 268.7,48.8 328.9,54.2" fill="none" stroke="#00c292" stroke-width="1.05" stroke-linejoin="round"/></svg></div>
<div class="card" style="left:110px;top:496.3px;width:352px;height:361.3px"><div class="t" style="left:49.80px;top:16.50px;font-size:20px;line-height:30px;font-weight:700;color:#a1a6bb;">93</div><div class="btn" style="left:107.3px;top:20.10px;width:54.3px;">요청 <span class="br">|</span> <b>83</b></div><div class="btn" style="left:167.2px;top:20.10px;width:54.3px;">공고 <span class="br">|</span> <b>3</b></div><div class="btn" style="left:227.2px;top:20.10px;width:54.3px;">진행 <span class="br">|</span> <b>7</b></div><div class="btn" style="left:287.2px;top:20.10px;width:54.3px;">완료 <span class="br">|</span> <b>0</b></div><div class="row" style="top:54.87px"><span style="left:5.7px"><span class="l">10/18</span></span><span style="left:57.4px">곽동규</span><span style="left:107.8px">전기공사<span class="l">(</span>양청<span class="l">) | Test(10/18)-</span>…</span></div><div class="row" style="top:89.87px"><span style="left:5.7px"><span class="l">10/18</span></span><span style="left:57.4px">곽동규</span><span style="left:107.8px">소방공사<span class="l">(</span>전의<span class="l">) | Test(10/18)-</span>…</span></div><div class="row" style="top:124.87px"><span style="left:5.7px"><span class="l">10/18</span></span><span style="left:57.4px">곽동규</span><span style="left:107.8px">일반소모품<span class="l">(</span>오창<span class="l">) | Test(10/18</span>…</span></div><div class="row" style="top:159.87px"><span style="left:5.7px"><span class="l">10/08</span></span><span style="left:57.4px">곽동규</span><span style="left:107.8px">일반소모품<span class="l">(</span>전의<span class="l">) | Test</span> 用 <span class="l">Val</span>…</span></div><div class="row" style="top:194.87px"><span style="left:5.7px"><span class="l">10/07</span></span><span style="left:57.4px">곽동규</span><span style="left:107.8px">소방공사 <span class="l">|</span> 오창사업장 소방공…</span></div><div class="row" style="top:229.87px"><span style="left:5.7px"><span class="l">04/16</span></span><span style="left:57.4px">이세민</span><span style="left:107.8px">일반소모품<span class="l">(</span>오창<span class="l">) | 3/4″ Air Be</span>…</span></div><div class="row" style="top:264.87px"><span style="left:5.7px"><span class="l">04/18</span></span><span style="left:57.4px">김민철</span><span style="left:107.8px">용기 <span class="l">| N2O ISO Tube 2</span>대 <span class="l">(Ta</span>…</span></div><div class="row" style="top:299.87px"><span style="left:5.7px"><span class="l">04/12</span></span><span style="left:57.4px">김기철</span><span style="left:107.8px">일반소모품<span class="l">(</span>오창<span class="l">) | M20V PP2-</span>…</span></div><div class="row" style="top:334.87px"><span style="left:5.7px"><span class="l">04/11</span></span><span style="left:57.4px">정승희</span><span style="left:107.8px">외주 전처리 <span class="l">|</span> 외주 전처리<span class="l">(</span>리드…</span></div></div>
<div class="card" style="left:472px;top:496.3px;width:352px;height:361.3px"><div class="t" style="left:49.80px;top:16.50px;font-size:20px;line-height:30px;font-weight:700;color:#a1a6bb;">10</div><div class="btn" style="left:107.3px;top:20.10px;width:54.3px;background:#98e6cd;border-color:#12c496;color:#fff;">견적 <span class="br">|</span> <b>6</b></div><div class="btn" style="left:167.2px;top:20.10px;width:54.3px;background:#97b1db;border-color:#0a4aae;color:#fff;">입찰 <span class="br">|</span> <b>4</b></div><div class="btn" style="left:227.2px;top:20.10px;width:54.3px;">진행 <span class="br">|</span> <b>10</b></div><div class="btn" style="left:287.2px;top:20.10px;width:54.3px;">평가 <span class="br">|</span> <b>0</b></div><div class="row" style="top:54.87px"><i class="dot" style="left:6.4px;top:13.1px;background:#98e6cd;border-color:#12c496"></i><span style="left:21.7px"><span class="l">10/24</span></span><span style="left:73.8px">주형석</span><span style="left:124px">일반소모품<span class="l">(</span>오창<span class="l">) | TS-510-</span>…</span></div><div class="row" style="top:89.87px"><i class="dot" style="left:6.4px;top:13.1px;background:#98e6cd;border-color:#12c496"></i><span style="left:21.7px"><span class="l">10/18</span></span><span style="left:73.8px">곽동규</span><span style="left:124px">전기공사<span class="l">(</span>양청<span class="l">) | Test(10/1</span>…</span></div><div class="row" style="top:124.87px"><i class="dot" style="left:6.4px;top:13.1px;background:#97b1db;border-color:#0a4aae"></i><span style="left:21.7px"><span class="l">10/18</span></span><span style="left:73.8px">곽동규</span><span style="left:124px">소방공사<span class="l">(</span>전의<span class="l">) | Test(10/1</span>…</span></div><div class="row" style="top:159.87px"><i class="dot" style="left:6.4px;top:13.1px;background:#98e6cd;border-color:#12c496"></i><span style="left:21.7px"><span class="l">10/18</span></span><span style="left:73.8px">곽동규</span><span style="left:124px">일반소모품<span class="l">(</span>오창<span class="l">) | Test(10/</span>…</span></div><div class="row" style="top:194.87px"><i class="dot" style="left:6.4px;top:13.1px;background:#98e6cd;border-color:#12c496"></i><span style="left:21.7px"><span class="l">10/17</span></span><span style="left:73.8px">김기철</span><span style="left:124px">일반소모품<span class="l">(</span>오창<span class="l">) | M20V P</span>…</span></div><div class="row" style="top:229.87px"><i class="dot" style="left:6.4px;top:13.1px;background:#97b1db;border-color:#0a4aae"></i><span style="left:21.7px"><span class="l">10/11</span></span><span style="left:73.8px">곽동규</span><span style="left:124px">일반소모품<span class="l">(</span>전의<span class="l">) | Test</span> 用 …</span></div><div class="row" style="top:264.87px"><i class="dot" style="left:6.4px;top:13.1px;background:#98e6cd;border-color:#12c496"></i><span style="left:21.7px"><span class="l">10/11</span></span><span style="left:73.8px">곽동규</span><span style="left:124px">소방공사 <span class="l">|</span> 오창사업장 소방…</span></div><div class="row" style="top:299.87px"><i class="dot" style="left:6.4px;top:13.1px;background:#97b1db;border-color:#0a4aae"></i><span style="left:21.7px"><span class="l">10/10</span></span><span style="left:73.8px">정승희</span><span style="left:124px">외주 전처리 <span class="l">|</span> 외주 전처리<span class="l">(</span>리…</span></div><div class="row" style="top:334.87px"><i class="dot" style="left:6.4px;top:13.1px;background:#98e6cd;border-color:#12c496"></i><span style="left:21.7px"><span class="l">10/08</span></span><span style="left:73.8px">이연형</span><span style="left:124px">소방공사<span class="l">(</span>양청<span class="l">) |</span> 소화전 도…</span></div></div>
<div class="card" style="left:834px;top:496.3px;width:352px;height:361.3px"><div class="t" style="left:49.80px;top:16.50px;font-size:20px;line-height:30px;font-weight:700;color:#a1a6bb;">0</div><div class="btn" style="left:107.3px;top:20.10px;width:54.3px;">공고</div><div class="btn" style="left:167.2px;top:20.10px;width:54.3px;">-</div><div class="btn" style="left:227.2px;top:20.10px;width:54.3px;">진행</div><div class="btn" style="left:287.2px;top:20.10px;width:54.3px;">완료</div></div>
<div class="card" style="left:1196px;top:496.3px;width:352px;height:361.3px"><div class="t" style="left:49.80px;top:16.50px;font-size:20px;line-height:30px;font-weight:700;color:#a1a6bb;">46</div><div class="btn" style="left:107.3px;top:20.10px;width:54.3px;">발주 <span class="br">|</span> <b>2</b></div><div class="btn" style="left:167.2px;top:20.10px;width:54.3px;">접수 <span class="br">|</span> <b>1</b></div><div class="btn" style="left:227.2px;top:20.10px;width:54.3px;">진행 <span class="br">|</span> <b>43</b></div><div class="btn" style="left:287.2px;top:20.10px;width:54.3px;">완료 <span class="br">|</span> <b>0</b></div><div class="row" style="top:54.87px"><span style="left:5.6px"><span class="l">10/18</span></span><span style="left:46px"><span class="l">(</span>주<span class="l">)</span>화신</span><span style="left:107.9px">전기공사<span class="l">(</span>양청<span class="l">) | Test(10/18)-</span>…</span></div><div class="row" style="top:89.87px"><span style="left:5.6px"><span class="l">10/16</span></span><span style="left:46px"><span class="l">(</span>주<span class="l">)</span>통해</span><span style="left:107.9px">배관공사<span class="l">(</span>양청<span class="l">) |</span> 양청 <span class="l">Test</span> 공사</span></div><div class="row" style="top:124.87px"><span style="left:5.6px"><span class="l">09/19</span></span><span style="left:46px"><span class="l">(</span>주<span class="l">)</span>화신</span><span style="left:107.9px">소방공사<span class="l">(</span>양청<span class="l">) |</span> 소방 작동기능…</span></div><div class="row" style="top:159.87px"><span style="left:5.6px"><span class="l">08/25</span></span><span style="left:46px">주식회…</span><span style="left:107.9px"><span class="l">1/4″ Regulator M/VCR 3000/</span>…</span></div><div class="row" style="top:194.87px"><span style="left:5.6px"><span class="l">08/19</span></span><span style="left:46px">로타렉…</span><span style="left:107.9px">재검사 <span class="l">| N20 ISO TUBE</span>用 <span class="l">Pn</span>…</span></div><div class="row" style="top:229.87px"><span style="left:5.6px"><span class="l">08/15</span></span><span style="left:46px"><span class="l">(</span>주<span class="l">)</span>이엔…</span><span style="left:107.9px">재검사 <span class="l">| N20 ISO TUBE Neck</span> …</span></div><div class="row" style="top:264.87px"><span style="left:5.6px"><span class="l">08/15</span></span><span style="left:46px">로타렉…</span><span style="left:107.9px"><span class="l">CGA 330 1/4″ Female VCR | -</span>…</span></div><div class="row" style="top:299.87px"><span style="left:5.6px"><span class="l">08/15</span></span><span style="left:46px"><span class="l">(</span>주<span class="l">)</span>삼인…</span><span style="left:107.9px"><span class="l">CGA 580 1/4 Female VCR | -</span> …</span></div><div class="row" style="top:334.87px"><span style="left:5.6px"><span class="l">08/15</span></span><span style="left:46px">로타렉…</span><span style="left:107.9px"><span class="l">Diss 728 1/4″ Female VCR | -</span>…</span></div></div>
<div class="card" style="left:1558px;top:496.3px;width:352px;height:361.3px"><div class="t" style="left:49.80px;top:16.50px;font-size:20px;line-height:30px;font-weight:700;color:#a1a6bb;">11</div><div class="btn" style="left:113.3px;top:20.10px;width:69.5px;">확정 <span class="br">|</span> <b>9</b></div><div class="btn" style="left:188.3px;top:20.10px;width:69.5px;">입고 <span class="br">|</span> <b>2</b></div><div class="btn" style="left:263.2px;top:20.10px;width:69.5px;">완료 <span class="br">|</span> <b>0</b></div><div class="row" style="top:54.87px"><span style="left:5.6px"><span class="l">10/19</span></span><span style="left:46px"><span class="l">(</span>주<span class="l">)</span>통해</span><span style="left:107.9px">배관공사<span class="l">(</span>양청<span class="l">) |</span> 양청 <span class="l">Test</span> 공사</span></div><div class="row" style="top:89.87px"><span style="left:5.6px"><span class="l">10/25</span></span><span style="left:46px"><span class="l">(</span>주<span class="l">)</span>화신</span><span style="left:107.9px">전기공사<span class="l">(</span>양청<span class="l">) | Test(10/18)-</span>…</span></div><div class="row" style="top:124.87px"><span style="left:5.6px"><span class="l">09/11</span></span><span style="left:46px">로타렉…</span><span style="left:107.9px"><span class="l">Diss 728 1/4″ Female VCR | -</span>…</span></div><div class="row" style="top:159.87px"><span style="left:5.6px"><span class="l">09/09</span></span><span style="left:46px">로타렉…</span><span style="left:107.9px"><span class="l">CGA 330 1/4″ Female VCR | -</span>…</span></div><div class="row" style="top:194.87px"><span style="left:5.6px"><span class="l">08/30</span></span><span style="left:46px">덕산에…</span><span style="left:107.9px">용기 <span class="l">| N2O ISO Tube 2</span>대 <span class="l">(Ta</span>…</span></div><div class="row" style="top:229.87px"><span style="left:5.6px"><span class="l">10/19</span></span><span style="left:46px"><span class="l">(</span>주<span class="l">)</span>화신</span><span style="left:107.9px">소방공사<span class="l">(</span>양청<span class="l">) |</span> 소방 작동기능…</span></div><div class="row" style="top:264.87px"><span style="left:5.6px"><span class="l">09/23</span></span><span style="left:46px"><span class="l">(</span>주<span class="l">)</span>삼인…</span><span style="left:107.9px"><span class="l">CGA580 1/2 Female VCR | -</span> …</span></div><div class="row" style="top:299.87px"><span style="left:5.6px"><span class="l">09/23</span></span><span style="left:46px"><span class="l">(</span>주<span class="l">)</span>유니락</span><span style="left:107.9px"><span class="l">1/4″ Union Female-Male VC</span>…</span></div><div class="row" style="top:334.87px"><span style="left:5.6px"><span class="l">08/14</span></span><span style="left:46px"><span class="l">(</span>주<span class="l">)</span>한국…</span><span style="left:107.9px">재검사 <span class="l">| CO2 TANK LORRY</span> 재…</span></div></div>
<div class="b" style="left:110.00px;top:867.00px;width:594.00px;height:165.00px;background:#fff;"></div>
<div class="b" style="left:714.00px;top:867.00px;width:593.00px;height:165.00px;background:#fff;"></div>
<div class="b" style="left:1317.00px;top:867.00px;width:593.00px;height:165.00px;background:#fff;"></div>
<div class="gap" style="left:704px;top:867px;height:165px"></div>
<div class="gap" style="left:1307px;top:867px;height:165px"></div>
<div class="t" style="top:883.62px;font-size:19.7px;line-height:30px;font-weight:700;color:#2c3e50;left:142.10px;word-spacing:-1px;">내부 공지사항</div>
<div class="t" style="top:889.50px;font-size:12.8px;line-height:20px;font-weight:400;color:#a1a6bb;left:264.40px;word-spacing:-0.6px;">(원익머트리얼즈 내부사용자)</div>
<div class="t" style="top:929.70px;font-size:12.8px;line-height:20px;font-weight:400;color:#212529;letter-spacing:-0.12px;left:144.60px;">2024/08/22</div>
<div class="t" style="top:929.70px;font-size:12.7px;line-height:20px;font-weight:400;color:#212529;left:236.20px;word-spacing:-1.1px;">협력사관리자 로그인 아이디 변경</div>
<div class="t" style="top:929.70px;font-size:12.8px;line-height:20px;font-weight:400;color:#212529;left:638.00px;">개발자</div>
<div class="b" style="left:120.10px;top:956.30px;width:573.60px;height:1.00px;background:#e6e6e6;"></div>
<div class="t" style="top:884.22px;font-size:19.6px;line-height:30px;font-weight:700;color:#2c3e50;left:735.90px;">납기준수율</div>
<div class="t" style="top:889.50px;font-size:12.8px;line-height:20px;font-weight:400;color:#a1a6bb;left:833.50px;">(발주담당자기준)</div>
<div class="b" style="left:1009.90px;top:930.00px;width:1.70px;height:102.00px;background:#ebecf3;"></div>
<div class="t" style="top:929.00px;font-size:12.8px;line-height:20px;font-weight:400;color:#a1a6bb;right:930.30px;text-align:right;word-spacing:-1px;">주간 (W44) 기준</div>
<div class="t" style="top:949.00px;font-size:40px;line-height:56px;font-weight:700;color:#00c292;right:968.40px;text-align:right;">10.0%</div>
<div class="t" style="top:1008.30px;font-size:12.8px;line-height:20px;font-weight:400;color:#a1a6bb;left:832.95px;">전주대비</div>
<svg class="ic" style="left:906.4px;top:1013.4px;width:13.600000000000023px;height:8.899999999999977px" viewBox="0 0 13.600000000000023 8.899999999999977"><polygon points="1.2,7.699999999999977 6.800000000000011,1.2 12.400000000000023,7.699999999999977" fill="#e0352b" stroke="#e0352b" stroke-width="2.2" stroke-linejoin="round"/></svg>
<div class="t" style="top:1003.20px;font-size:20.0px;line-height:30px;font-weight:500;color:#e0352b;right:930.75px;text-align:right;-webkit-text-stroke:0.45px #e0352b;">10.0%</div>
<div class="t" style="top:929.00px;font-size:12.8px;line-height:20px;font-weight:400;color:#a1a6bb;right:633.10px;text-align:right;word-spacing:-1px;">월간 (2024/10월) 기준</div>
<div class="t" style="top:949.00px;font-size:40px;line-height:56px;font-weight:700;color:#0046ab;right:671.00px;text-align:right;">13.0%</div>
<div class="t" style="top:1008.30px;font-size:12.8px;line-height:20px;font-weight:400;color:#a1a6bb;left:1130.35px;">전월대비</div>
<svg class="ic" style="left:1203.2px;top:1014.7px;width:14.200000000000045px;height:7.899999999999977px" viewBox="0 0 14.200000000000045 7.899999999999977"><polygon points="1.2,1.2 7.100000000000023,6.699999999999977 13.000000000000046,1.2" fill="#0046ab" stroke="#0046ab" stroke-width="2.2" stroke-linejoin="round"/></svg>
<div class="t" style="top:1003.20px;font-size:20.0px;line-height:30px;font-weight:500;color:#0046ab;right:633.65px;text-align:right;-webkit-text-stroke:0.45px #0046ab;">28.2%</div>
<div class="t" style="top:884.22px;font-size:19.6px;line-height:30px;font-weight:700;color:#2c3e50;left:1338.20px;word-spacing:-1px;">구매-발주 평균소요일</div>
<div class="b" style="left:1612.50px;top:930.00px;width:1.70px;height:102.00px;background:#ebecf3;"></div>
<div class="t" style="top:929.00px;font-size:12.8px;line-height:20px;font-weight:400;color:#a1a6bb;right:327.50px;text-align:right;word-spacing:-1px;">주간 (W44) 기준</div>
<div class="t" style="top:949.02px;font-size:39.6px;line-height:56px;font-weight:700;color:#00c292;right:366.30px;text-align:right;">0.0일</div>
<div class="t" style="top:1008.30px;font-size:12.8px;line-height:20px;font-weight:400;color:#a1a6bb;left:1447.65px;">전주대비</div>
<svg class="ic" style="left:1521.0px;top:1013.4px;width:13.599999999999909px;height:8.899999999999977px" viewBox="0 0 13.599999999999909 8.899999999999977"><polygon points="1.2,7.699999999999977 6.7999999999999545,1.2 12.39999999999991,7.699999999999977" fill="#e0352b" stroke="#e0352b" stroke-width="2.2" stroke-linejoin="round"/></svg>
<div class="t" style="top:1003.20px;font-size:20.0px;line-height:30px;font-weight:500;color:#e0352b;right:328.05px;text-align:right;-webkit-text-stroke:0.45px #e0352b;">0.0%</div>
<div class="t" style="top:929.00px;font-size:12.8px;line-height:20px;font-weight:400;color:#a1a6bb;right:30.30px;text-align:right;word-spacing:-1px;">월간 (2024/10월) 기준</div>
<div class="t" style="top:949.02px;font-size:39.6px;line-height:56px;font-weight:700;color:#0046ab;right:69.50px;text-align:right;">0.0일</div>
<div class="t" style="top:1008.30px;font-size:12.8px;line-height:20px;font-weight:400;color:#a1a6bb;left:1745.25px;">전월대비</div>
<svg class="ic" style="left:1818.3px;top:1013.4px;width:13.599999999999909px;height:8.899999999999977px" viewBox="0 0 13.599999999999909 8.899999999999977"><polygon points="1.2,7.699999999999977 6.7999999999999545,1.2 12.39999999999991,7.699999999999977" fill="#e0352b" stroke="#e0352b" stroke-width="2.2" stroke-linejoin="round"/></svg>
<div class="t" style="top:1003.20px;font-size:20.0px;line-height:30px;font-weight:500;color:#e0352b;right:30.85px;text-align:right;-webkit-text-stroke:0.45px #e0352b;">0.0%</div>
</div></div></div>
</body></html>
